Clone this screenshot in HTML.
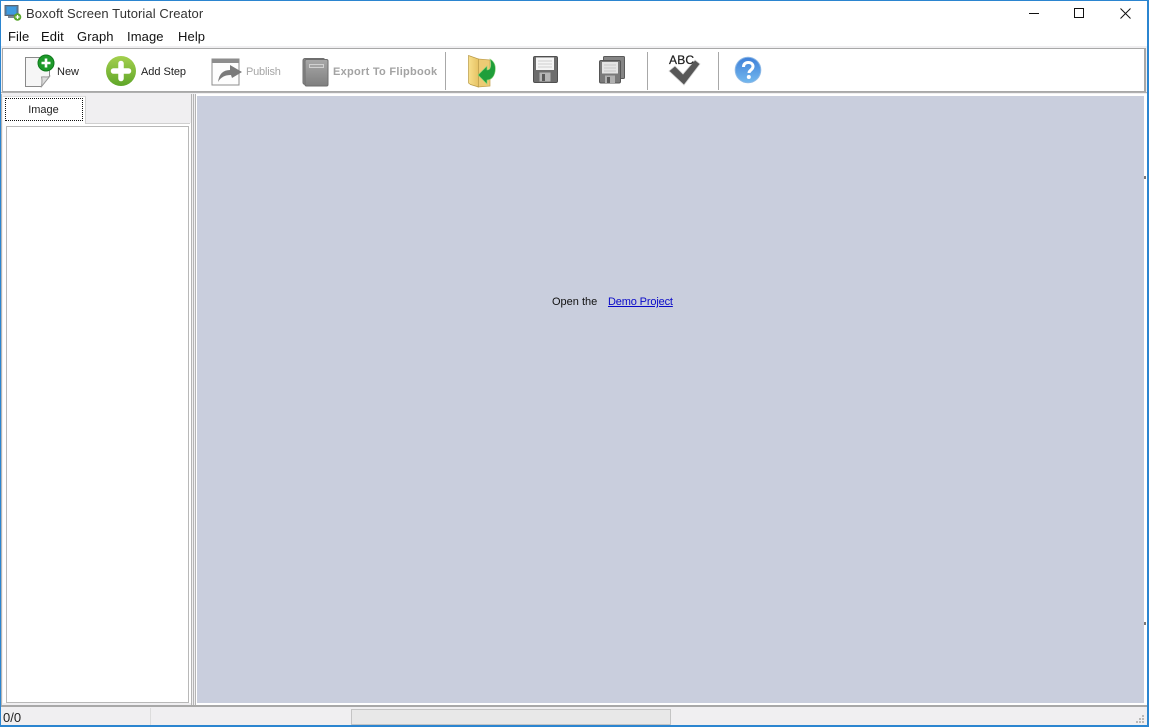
<!DOCTYPE html>
<html>
<head>
<meta charset="utf-8">
<title>Boxoft Screen Tutorial Creator</title>
<style>
html,body{margin:0;padding:0;background:#f0eff1;}
#w{position:relative;width:1149px;height:727px;overflow:hidden;background:#f0eff1;font-family:"Liberation Sans",sans-serif;color:#111;}
#w div,#w svg,#w span,#w a{position:absolute;}
.t{white-space:nowrap;line-height:14px;}
.m{font-size:13px;top:29px;color:#111;white-space:nowrap;line-height:15px;letter-spacing:.1px;}
.b{font-size:11px;white-space:nowrap;line-height:13px;}
.sep{width:1px;background:#a8a8a8;top:52px;height:38px;}
</style>
</head>
<body>
<div id="w">
<div style="left:0;top:0;width:1149px;height:46px;background:#fff"></div>
<!-- title -->
<svg style="left:4px;top:4px" width="18" height="18" viewBox="0 0 18 18">
<rect x="1" y="1.500" width="13" height="10" fill="#4a86b8" stroke="#5a6470"/>
<rect x="3" y="3" width="9" height="7" fill="#3f9be0"/>
<rect x="4" y="12" width="8" height="2" fill="#7a8694"/>
<circle cx="13.500" cy="13" r="3.800" fill="#5aa62e"/>
<path d="M11.500 13h4M13.500 11v4" stroke="#fff" stroke-width="1.300"/>
</svg>
<div class="t" style="left:26px;top:6px;font-size:13px;line-height:16px;color:#333;letter-spacing:.08px">Boxoft Screen Tutorial Creator</div>
<!-- window controls -->
<svg style="left:1020px;top:0" width="129" height="26" viewBox="0 0 129 26">
<path d="M9 13.500h10" stroke="#111" stroke-width="1"/>
<rect x="54.500" y="8.500" width="9" height="9" fill="none" stroke="#111"/>
<path d="M100.500 8.500l10 10M110.500 8.500l-10 10" stroke="#111" stroke-width="1"/>
</svg>
<!-- menu -->
<div class="m" style="left:8px">File</div>
<div class="m" style="left:41px">Edit</div>
<div class="m" style="left:77px">Graph</div>
<div class="m" style="left:127px">Image</div>
<div class="m" style="left:178px">Help</div>
<!-- toolbar -->
<div style="left:2px;top:48px;width:1141px;height:42px;background:#fff;border:2px solid #a8a8a8;border-top-width:1px;border-left-width:1px;border-right-width:2px"></div>
<div style="left:0;top:92px;width:1149px;height:1px;background:#b0b0b0"></div>
<!-- new -->
<svg style="left:24px;top:54px" width="34" height="34" viewBox="0 0 34 34">
<path d="M1.500 3.500h24v19l-8 10h-16z" fill="#f6f6f6" stroke="#8a8a8a"/>
<path d="M25.500 22.500c-3 1-6 0-8 .5 .8 3 .5 6 0 9.500z" fill="#dcdcdc" stroke="#9a9a9a"/>
<circle cx="22" cy="9" r="8" fill="#1d9a2a" stroke="#0f7a1c"/>
<path d="M17.500 9h9M22 4.500v9" stroke="#fff" stroke-width="2.600"/>
</svg>
<div class="b" style="left:57px;top:66px;color:#222">New</div>
<!-- add step -->
<svg style="left:105px;top:55px" width="32" height="32" viewBox="0 0 32 32">
<defs><linearGradient id="g1" x1="0" y1="0" x2="0" y2="1"><stop offset="0" stop-color="#a4d04e"/><stop offset="1" stop-color="#5fa629"/></linearGradient></defs>
<circle cx="16" cy="16" r="15" fill="url(#g1)"/>
<path d="M8.500 16h15M16 8.500v15" stroke="#fff" stroke-width="5.500" stroke-linecap="round"/>
</svg>
<div class="b" style="left:141px;top:66px;color:#222;letter-spacing:-.03px">Add Step</div>
<!-- publish -->
<svg style="left:211px;top:58px" width="32" height="28" viewBox="0 0 32 28">
<rect x="1" y="1" width="27" height="26" fill="#fdfdfd" stroke="#8d8d8d"/>
<rect x="1" y="1" width="27" height="4" fill="#8d8d8d"/>
<path d="M7 24C8 16 12 12 19 12L19 7L31 14L21 20L20 17C14 17 10 19 7 24Z" fill="#7b7b7b"/>
</svg>
<div class="b" style="left:246px;top:66px;color:#a6a6a6;letter-spacing:-.2px">Publish</div>
<!-- export -->
<svg style="left:302px;top:57px" width="28" height="30" viewBox="0 0 28 30">
<defs><linearGradient id="g2" x1="0" y1="0" x2="0" y2="1"><stop offset="0" stop-color="#a8a8a8"/><stop offset="1" stop-color="#7f7f7f"/></linearGradient></defs>
<rect x="1" y="1.500" width="22" height="26" rx="2" fill="#8a8a8a" stroke="#6e6e6e"/>
<rect x="3" y="2.500" width="23" height="26.500" rx="1.500" fill="url(#g2)" stroke="#6e6e6e"/>
<rect x="7" y="7" width="15" height="4" fill="#d0d0d0"/>
<path d="M8 9h13" stroke="#777" stroke-width="1"/>
</svg>
<div class="b" style="left:333px;top:66px;color:#a3a3a3;font-weight:bold;letter-spacing:.28px">Export To Flipbook</div>
<div class="sep" style="left:445px"></div>
<!-- open folder -->
<svg style="left:466px;top:54px" width="32" height="36" viewBox="0 0 32 36">
<defs><linearGradient id="g3" x1="0" y1="0" x2="1" y2="0"><stop offset="0" stop-color="#f8e08c"/><stop offset="1" stop-color="#e6c264"/></linearGradient></defs>
<path d="M12 5l12 1v26l-12 1z" fill="#eccb74" stroke="#c4a24f" stroke-width=".7"/>
<path d="M2.500 1.500l10 3.500v28l-8-2.500-2-1.500z" fill="url(#g3)" stroke="#b99a48" stroke-width=".7"/>
<path d="M12 21L21 12V16C24 16 26 13 24 5C29 8 30 13 29 18C28 23 25 26 21 26V30Z" fill="#1f9e3a" stroke="#8ed67a" stroke-width=".6"/>
</svg>
<!-- save -->
<svg style="left:532px;top:55px" width="28" height="28" viewBox="0 0 28 28">
<rect x="1.500" y="1.500" width="24" height="26" rx="1.500" fill="#6d6d6d" stroke="#4f4f4f"/>
<rect x="4" y="2.500" width="18" height="12.500" fill="#f5f5f5"/>
<path d="M6 6h14M6 9h14M6 12h14" stroke="#cfcfcf" stroke-width="1"/>
<rect x="7.500" y="17.500" width="11" height="9" fill="#b5b5b5"/>
<rect x="10" y="19" width="3" height="7" fill="#5a5a5a"/>
</svg>
<!-- save all -->
<svg style="left:598px;top:56px" width="28" height="28" viewBox="0 0 28 28">
<rect x="5.500" y="0.500" width="21" height="22" rx="1" fill="#858585" stroke="#5a5a5a"/>
<rect x="1.500" y="4.500" width="21" height="22.500" rx="1.500" fill="#7a7a7a" stroke="#555"/>
<rect x="4" y="6" width="16" height="11.500" fill="#e4e4e4"/>
<path d="M6 9h12M6 12h12M6 15h12" stroke="#c8c8c8" stroke-width="1"/>
<rect x="7" y="19.500" width="10" height="7.500" fill="#b0b0b0"/>
<rect x="9" y="21" width="3" height="6" fill="#5a5a5a"/>
</svg>
<div class="sep" style="left:647px"></div>
<!-- abc -->
<svg style="left:668px;top:54px" width="34" height="32" viewBox="0 0 34 32">
<path d="M1 17L7 12L15 20L27 6L32 10L16 31Z" fill="#575757" stroke="#d4d4d4" stroke-width=".8"/>
</svg>
<div class="b" style="left:669px;top:54px;font-size:12px;color:#222;letter-spacing:.2px;-webkit-text-stroke:.25px #222">ABC</div>
<div class="sep" style="left:718px"></div>
<!-- help -->
<svg style="left:734px;top:56px" width="28" height="28" viewBox="0 0 28 28">
<defs><linearGradient id="g4" x1="0" y1="0" x2="0" y2="1"><stop offset="0" stop-color="#3f80d8"/><stop offset="1" stop-color="#72b8ee"/></linearGradient></defs>
<circle cx="14" cy="14" r="12.800" fill="url(#g4)" stroke="#8cb8e6"/>
<path d="M9.500 11c0-3 2-4.500 4.700-4.500 3 0 4.800 1.700 4.800 4 0 3.500-4 3.500-4 6.500" fill="none" stroke="#fff" stroke-width="3"/>
<circle cx="14.800" cy="21" r="2" fill="#fff"/>
</svg>
<!-- left panel -->
<div style="left:2px;top:94px;width:189px;height:611px;border-right:1px solid #b4b4b4;background:#f0eff1"></div>
<div style="left:193px;top:94px;width:1px;height:611px;background:#b4b4b4"></div>
<div style="left:1px;top:94px;width:1px;height:611px;background:#b4b4b4"></div>
<div style="left:3px;top:96px;width:82px;height:28px;background:#fff;border-top:1px solid #ddd;border-right:1px solid #d0d0d0"></div>
<div style="left:5px;top:98px;width:76px;height:21px;border:1px dotted #111"></div>
<div class="t" style="left:5px;top:103px;width:77px;text-align:center;font-size:11px;color:#222">Image</div>
<div style="left:3px;top:123px;width:188px;height:580px;background:#fff"></div>
<div style="left:85px;top:123px;width:105px;height:1px;background:#d0d0d0"></div>
<div style="left:6px;top:126px;width:181px;height:575px;background:#fff;border:1px solid #b8b8b8"></div>
<!-- main -->
<div style="left:195px;top:94px;width:952px;height:611px;background:#fff"></div>
<div style="left:197px;top:96px;width:947px;height:607px;background:#c9cedd"></div>
<div style="left:195px;top:94px;width:1px;height:611px;background:#b4b4b4"></div>
<div style="left:1144px;top:176px;width:2px;height:3px;background:#777"></div>
<div style="left:1144px;top:622px;width:2px;height:3px;background:#777"></div>
<div class="t" style="left:552px;top:295px;font-size:11px;color:#111">Open the</div>
<a class="t" style="left:608px;top:295px;font-size:11px;color:#0a0ac8;text-decoration:underline;letter-spacing:-.15px">Demo Project</a>
<div style="left:0;top:705px;width:1149px;height:2px;background:#a8a8a8"></div>
<!-- status -->
<div style="left:0;top:707px;width:1149px;height:18px;background:#f0eff1"></div>
<div class="t" style="left:3px;top:711px;font-size:13px;color:#222">0/0</div>
<div style="left:150px;top:708px;width:1px;height:17px;background:#dcdcdc"></div>
<div style="left:351px;top:709px;width:318px;height:14px;background:#e8e8e8;border:1px solid #c4c4c4"></div>
<svg style="left:1136px;top:714px" width="10" height="11" viewBox="0 0 10 11">
<path d="M6 1h2v2h-2zM3 4h2v2h-2zM6 4h2v2h-2zM0 7h2v2h-2zM3 7h2v2h-2zM6 7h2v2h-2z" fill="#b8b8b8"/>
</svg>
<!-- window border -->
<div style="left:0;top:0;width:1149px;height:1px;background:#2b85d0"></div>
<div style="left:0;top:0;width:1px;height:727px;background:#2b85d0"></div>
<div style="left:1147px;top:0;width:2px;height:727px;background:#2b85d0"></div>
<div style="left:0;top:725px;width:1149px;height:2px;background:#2b85d0"></div>
</div>
</body>
</html>
